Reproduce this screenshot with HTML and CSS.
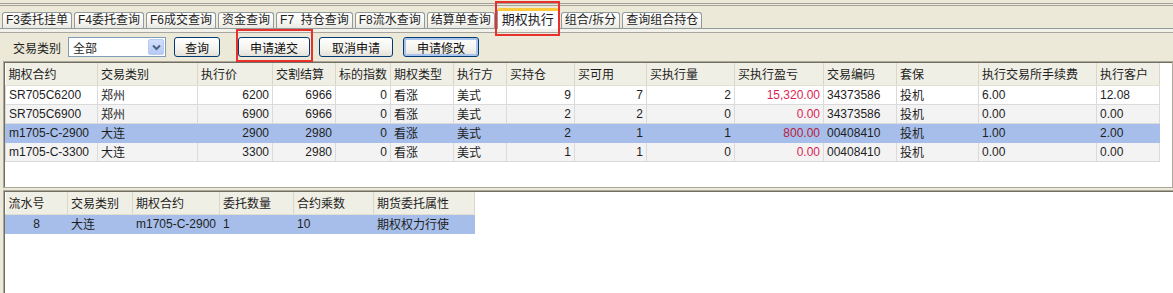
FILE: index.html
```html
<!DOCTYPE html>
<html lang="zh-CN">
<head>
    <meta charset="UTF-8">
    <title>期权执行</title>
    <link rel="stylesheet" href="styles.css">
</head>
<body>
    <div class="topline"></div>

    <div class="tabs">
        <div class="tab">F3委托挂单</div>
        <div class="tab">F4委托查询</div>
        <div class="tab">F6成交查询</div>
        <div class="tab">资金查询</div>
        <div class="tab">F7  持仓查询</div>
        <div class="tab">F8流水查询</div>
        <div class="tab">结算单查询</div>
        <div class="tab active">期权执行<span class="mark mark-tab"></span></div>
        <div class="tab">组合/拆分</div>
        <div class="tab">查询组合持仓</div>
    </div>
    <div class="tabline"></div>

    <div class="toolbar">
        <span class="label">交易类别</span>
        <div class="select">
            <span>全部</span>
            <span class="drop">
                <svg width="9" height="7" viewBox="0 0 9 7"><path d="M1 1.5 L4.5 5 L8 1.5" fill="none" stroke="#4d6185" stroke-width="2"/></svg>
            </span>
        </div>
        <button class="btn btn-query">查询</button>
        <button class="btn btn-submit">申请递交<span class="mark mark-btn"></span></button>
        <button class="btn btn-cancel">取消申请</button>
        <button class="btn btn-modify focus">申请修改</button>
    </div>

    <div class="panel upper">
        <table class="grid">
            <colgroup>
                <col style="width:92px"><col style="width:100px"><col style="width:75px"><col style="width:63px">
                <col style="width:54px"><col style="width:63px"><col style="width:53px"><col style="width:68px">
                <col style="width:72px"><col style="width:88px"><col style="width:89px"><col style="width:73px">
                <col style="width:82px"><col style="width:118px"><col style="width:63px">
            </colgroup>
            <thead>
                <tr>
                    <th>期权合约</th><th>交易类别</th><th>执行价</th><th>交割结算</th><th>标的指数</th>
                    <th>期权类型</th><th>执行方</th><th>买持仓</th><th>买可用</th><th>买执行量</th>
                    <th>买执行盈亏</th><th>交易编码</th><th>套保</th><th>执行交易所手续费</th><th>执行客户</th>
                </tr>
            </thead>
            <tbody>
                <tr>
                    <td>SR705C6200</td><td>郑州</td><td class="num">6200</td><td class="num">6966</td><td class="num">0</td>
                    <td>看涨</td><td>美式</td><td class="num">9</td><td class="num">7</td><td class="num">2</td>
                    <td class="num red">15,320.00</td><td>34373586</td><td>投机</td><td>6.00</td><td>12.08</td>
                </tr>
                <tr>
                    <td>SR705C6900</td><td>郑州</td><td class="num">6900</td><td class="num">6966</td><td class="num">0</td>
                    <td>看涨</td><td>美式</td><td class="num">2</td><td class="num">2</td><td class="num">0</td>
                    <td class="num red">0.00</td><td>34373586</td><td>投机</td><td>0.00</td><td>0.00</td>
                </tr>
                <tr class="selected">
                    <td>m1705-C-2900</td><td>大连</td><td class="num">2900</td><td class="num">2980</td><td class="num">0</td>
                    <td>看涨</td><td>美式</td><td class="num">2</td><td class="num">1</td><td class="num">1</td>
                    <td class="num red">800.00</td><td>00408410</td><td>投机</td><td>1.00</td><td>2.00</td>
                </tr>
                <tr>
                    <td>m1705-C-3300</td><td>大连</td><td class="num">3300</td><td class="num">2980</td><td class="num">0</td>
                    <td>看涨</td><td>美式</td><td class="num">1</td><td class="num">1</td><td class="num">0</td>
                    <td class="num red">0.00</td><td>00408410</td><td>投机</td><td>0.00</td><td>0.00</td>
                </tr>
            </tbody>
        </table>
    </div>

    <div class="panel lower">
        <table class="grid">
            <colgroup>
                <col style="width:62px"><col style="width:65px"><col style="width:86px">
                <col style="width:74px"><col style="width:80px"><col style="width:101px">
            </colgroup>
            <thead>
                <tr>
                    <th>流水号</th><th>交易类别</th><th>期权合约</th><th>委托数量</th><th>合约乘数</th><th>期货委托属性</th>
                </tr>
            </thead>
            <tbody>
                <tr class="selected">
                    <td class="center">8</td><td>大连</td><td>m1705-C-2900</td><td>1</td><td>10</td><td>期权权力行使</td>
                </tr>
            </tbody>
        </table>
    </div>
</body>
</html>
```

FILE: styles.css
```css
* {
    margin: 0;
    padding: 0;
    box-sizing: border-box;
}

body {
    background-color: #ece9d8;
    color: #1e1e1e;
    font-family: "Liberation Sans", "Noto Sans CJK SC", sans-serif;
    font-size: 12px;
    width: 1173px;
    height: 293px;
    overflow: hidden;
}

.topline {
    height: 10px;
    background: linear-gradient(to bottom,
        transparent 3px, #a3a29b 3px, #a3a29b 4px,
        transparent 4px, transparent 5px, #a3a29b 5px, #a3a29b 6px,
        transparent 6px);
}

/* tab strip */
.tabs {
    display: flex;
    align-items: flex-end;
    gap: 2px;
    height: 19px;
    padding-left: 2px;
    border-bottom: 1px solid #919b9c;
}

.tab {
    position: relative;
    height: 16px;
    padding: 0 3px;
    line-height: 15px;
    white-space: pre;
    border: 1px solid #919b9c;
    border-bottom: none;
    border-radius: 3px 3px 0 0;
    background: linear-gradient(#ffffff, #f3f3ef 70%, #e9e8e1);
}

.tab.active {
    height: 21px;
    margin-bottom: -1px;
    padding: 0 4px;
    line-height: 17px;
    background: #fcfcfe;
    border-top: 3px solid #ffc83c;
    font-size: 13px;
}

.tabline {
    height: 4px;
    background: #f2f1ea;
    border-bottom: 1px solid #a7a6a0;
}

/* red annotation boxes */
.mark {
    position: absolute;
    border: 2px solid #e8302c;
    pointer-events: none;
}

.mark-tab {
    top: -10px;
    bottom: -7px;
    left: -3px;
    right: -2px;
}

.mark-btn {
    top: -9px;
    bottom: -6px;
    left: -3px;
    right: -4px;
}

/* toolbar */
.toolbar {
    display: flex;
    align-items: center;
    height: 28px;
    padding-left: 13px;
}

.label {
    margin-right: 7px;
}

.select {
    display: flex;
    align-items: center;
    justify-content: space-between;
    width: 98px;
    height: 20px;
    padding: 0 1px 0 4px;
    background: white;
    border: 1px solid #7f9db9;
}

.drop {
    display: flex;
    align-items: center;
    justify-content: center;
    width: 16px;
    height: 16px;
    background: linear-gradient(#d2defc, #b6c9f6);
    border: 1px solid #b9cbf3;
    border-radius: 2px;
}

.btn {
    position: relative;
    height: 20px;
    font-family: inherit;
    font-size: 12px;
    color: #111;
    border: 1px solid #003c74;
    border-radius: 3px;
    background: linear-gradient(#ffffff, #f4f3ee 60%, #e3e1d8);
}

.btn-query { width: 46px; margin-left: 8px; }
.btn-submit { width: 72px; margin-left: 18px; }
.btn-cancel { width: 74px; margin-left: 9px; }
.btn-modify { width: 76px; margin-left: 10px; }

.btn.focus {
    box-shadow: inset 0 0 0 2px #a9c4ef;
}

/* list panels */
.panel {
    margin-left: 3px;
    background: white;
    border: 1px solid #aca899;
    box-shadow: inset 1px 1px 0 #716f64;
    padding: 1px 0 0 1px;
}

.upper {
    width: 1170px;
    height: 127px;
}

.lower {
    width: 1190px;
    height: 110px;
    margin-top: 2px;
}

.grid {
    border-collapse: collapse;
    table-layout: fixed;
}

.grid th {
    height: 22px;
    padding: 0 3px;
    text-align: left;
    font-weight: normal;
    background: #f0efe5;
    border-right: 1px solid #dbd8c8;
    border-bottom: 1px solid #e2dfd0;
    white-space: nowrap;
    overflow: hidden;
}

.grid td {
    height: 19px;
    padding: 0 3px;
    border: 1px solid #dadada;
    white-space: nowrap;
    overflow: hidden;
}

.grid tbody tr:nth-child(even) td {
    background: #f3f3f3;
}

.grid tbody tr.selected td {
    background: #a6bee9;
    border-color: #a6bee9;
}

.num {
    text-align: right;
}

.center {
    text-align: center;
}

.red {
    color: #dc1f55;
}

.selected .red {
    color: #b8203e;
}
```
